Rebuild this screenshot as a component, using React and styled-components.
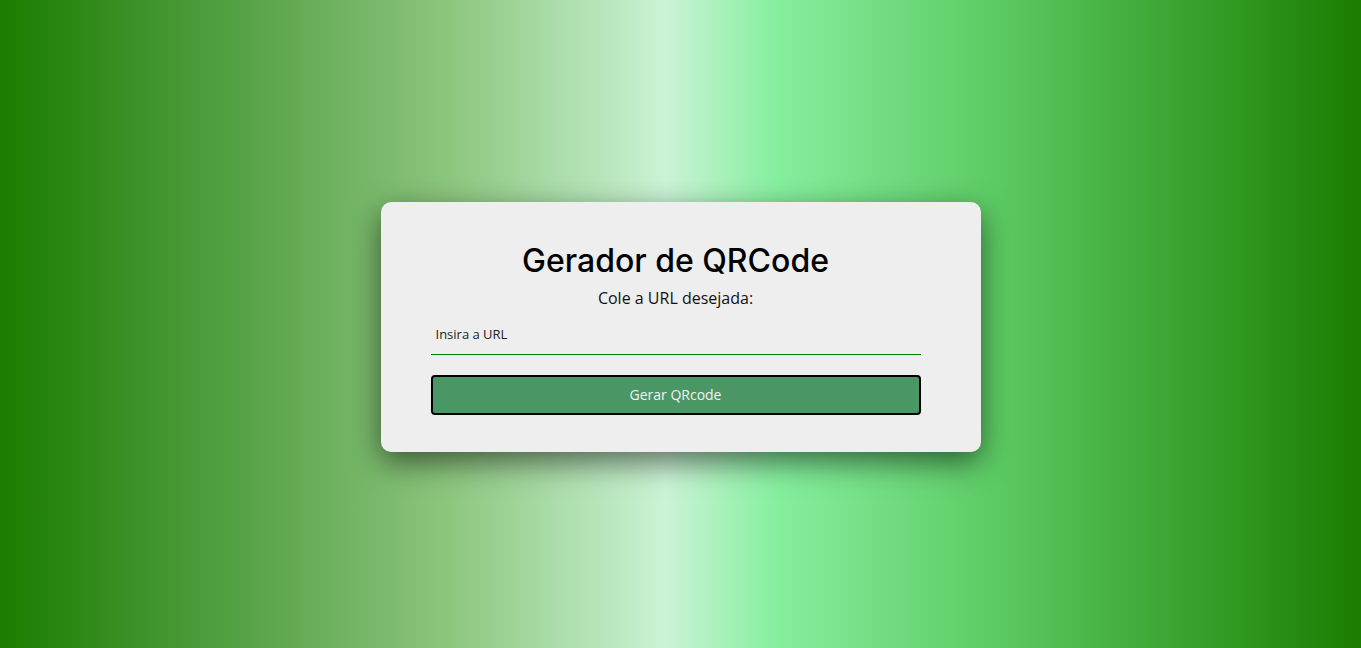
import React from "react";
import styled, { createGlobalStyle } from "styled-components";

const GlobalStyle = createGlobalStyle`
  * {
    box-sizing: border-box;
  }
  body {
    margin: 0;
    font-family: "Open Sans", "Liberation Sans", sans-serif;
  }
`

const Page = styled.main`
  min-height: 100vh;
  display: flex;
  align-items: center;
  justify-content: center;
  background: linear-gradient(
    90deg,
    #1a7d00 0%,
    #5ea64f 20%,
    #8cc67e 33%,
    #cbf3d6 49%,
    #86ef9f 57%,
    #5ccb63 73%,
    #1a7d00 100%
  );
`

const Card = styled.section`
  width: 600px;
  padding: 40px 60px 37px 50px;
  display: flex;
  flex-direction: column;
  align-items: stretch;
  background: #eeeeee;
  border-radius: 10px;
  box-shadow: 0 10px 30px rgba(0, 0, 0, 0.55);
  margin-top: 5px;
`

const Title = styled.h1`
  margin: 0;
  font-family: "Inter", "Open Sans", sans-serif;
  font-size: 32px;
  line-height: 38px;
  font-weight: 500;
  text-align: center;
  color: #000;
`

const Subtitle = styled.p`
  margin: 6px 0 0;
  font-size: 16px;
  line-height: 24px;
  text-align: center;
  color: #111;
`

const UrlInput = styled.input`
  margin-top: 5px;
  height: 40px;
  padding: 0 5px;
  border: none;
  border-bottom: 1px solid #008000;
  background: transparent;
  font-family: inherit;
  font-size: 13px;
  color: #111;
  outline: none;

  &::placeholder {
    color: #222;
  }
`

const GenerateButton = styled.button`
  margin-top: 20px;
  height: 40px;
  background: #4a9664;
  border: 2px solid #000;
  border-radius: 4px;
  font-family: inherit;
  font-size: 14px;
  color: #f2f2f2;
  cursor: pointer;
`

const App = () => {
  return (
    <Page>
      <GlobalStyle />
      <Card>
        <Title>Gerador de QRCode</Title>
        <Subtitle>Cole a URL desejada:</Subtitle>
        <UrlInput type="text" placeholder="Insira a URL" />
        <GenerateButton>Gerar QRcode</GenerateButton>
      </Card>
    </Page>
  )
}

export default App;
